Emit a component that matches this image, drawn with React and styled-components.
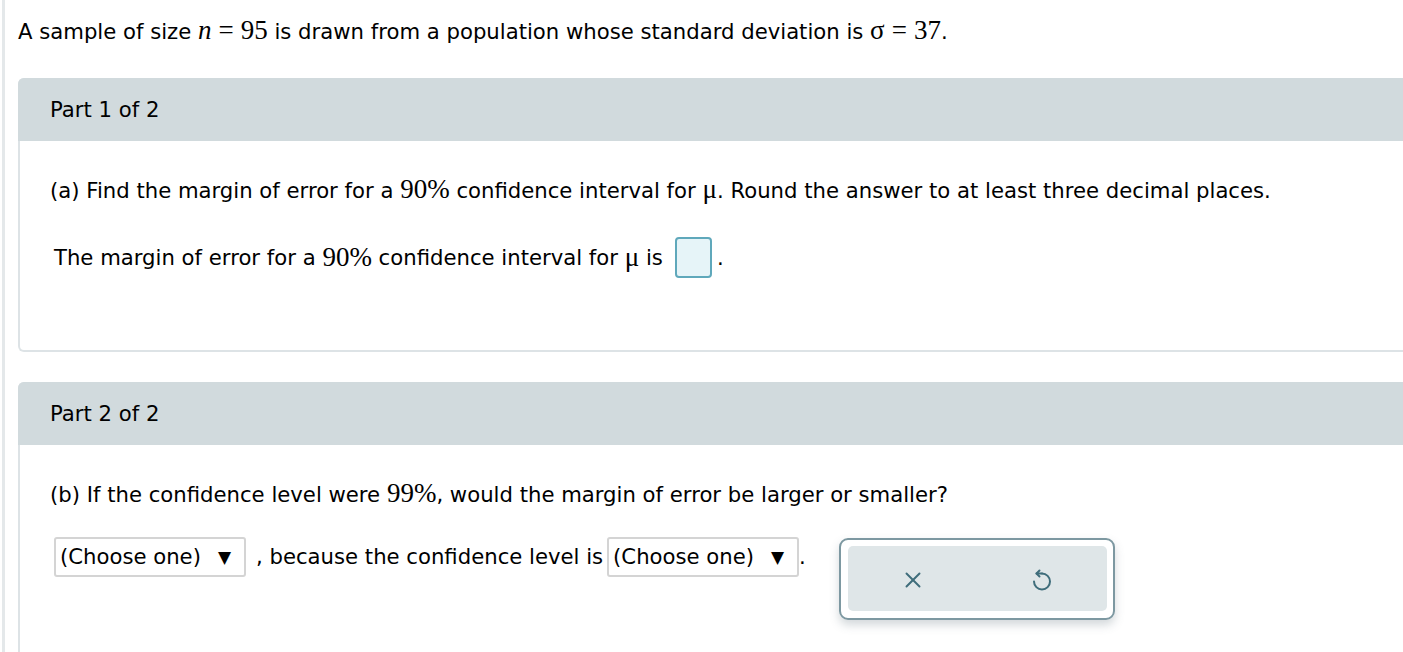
import React from "react";
import styled, { createGlobalStyle } from "styled-components";
import { X } from "lucide-react";

const Global = createGlobalStyle`
	html, body {
		margin: 0;
		padding: 0;
		background: #fff;
		overflow: hidden;
	}
	body {
		font-family: Verdana, "DejaVu Sans", sans-serif;
		color: #000;
	}
`;

const Page = styled.div`
	height: 652px;
	margin-left: 2px;
	border-left: 3px solid #e4e8ea;
	padding: 17px 0 0 13px;
	box-sizing: border-box;
`;

const Intro = styled.div`
	font-size: 21.2px;
	line-height: 28px;
	margin-bottom: 32px;
`;

const M = styled.span`
	font-family: "Liberation Serif", "DejaVu Serif", serif;
	font-size: 27px;
	line-height: 1;
	font-style: ${p => (p.$italic ? "italic" : "normal")};
`;

const Eq = styled.span`
	font-family: "Liberation Serif", "DejaVu Serif", serif;
	font-size: 27px;
	line-height: 1;
	margin: 0 7px;
`;

const Card = styled.section`
	width: 1400px;
	border: 2px solid #dde3e6;
	border-right: none;
	border-radius: 6px 0 0 6px;
	margin-bottom: 30px;
	min-height: ${p => p.$minHeight}px;
	box-sizing: border-box;
`;

const CardHead = styled.div`
	background: #d1dadd;
	height: 63px;
	display: flex;
	align-items: center;
	padding-left: 32px;
	font-size: 21.2px;
	margin: -2px 0 0 -2px;
	border-radius: 6px 0 0 0;
`;

const CardBody = styled.div`
	padding: 35px 0 0 30px;
	font-size: 21.2px;
`;

const Question = styled.div`
	line-height: 28px;
	margin-bottom: 32px;
`;

const AnswerRow = styled.div`
	display: flex;
	align-items: center;
	padding-left: ${p => p.$indent || 0}px;
	line-height: 28px;
`;

const AnswerBox = styled.span`
	display: inline-block;
	width: 33px;
	height: 37px;
	border: 2px solid #5fa8bb;
	border-radius: 4px;
	background: #e6f4f8;
	margin: 0 5px 0 12px;
`;

const Select = styled.span`
	display: inline-flex;
	align-items: center;
	height: 36px;
	padding: 0 13px 0 4px;
	border: 2px solid #d4d4d4;
	border-radius: 3px;
	margin: ${p => p.$margin};
	white-space: nowrap;
`;

const Arrow = styled.span`
	font-size: 17px;
	margin-left: 17px;
`;

const Row2 = styled.div`
	display: flex;
	align-items: flex-start;
	padding-left: 4px;
	margin-top: -4px;
`;

const Line = styled.div`
	display: flex;
	align-items: center;
	line-height: 28px;
`;

const ActionsWrap = styled.div`
	margin-left: 33px;
	margin-top: 1px;
	width: 276px;
	height: 82px;
	border: 2px solid #7d98a1;
	border-radius: 9px;
	box-shadow: 0 5px 10px rgba(80, 100, 110, 0.25);
	padding: 6px 6px 7px 7px;
	box-sizing: border-box;
`;

const Actions = styled.div`
	background: #dfe6e8;
	border-radius: 5px;
	height: 100%;
	display: flex;
	align-items: center;
	justify-content: space-around;
	color: #3f6d7b;
`;

const IconBtn = styled.span`
	display: flex;
	width: 70px;
	justify-content: center;
	padding-top: 2px;
`;

function UndoIcon() {
	return (
		<svg width="24" height="24" viewBox="0 0 24 24" fill="none" stroke="currentColor"
			strokeWidth="2" strokeLinecap="round" strokeLinejoin="round">
			<path d="M12 5.5 A8 8 0 1 1 4 13.5" />
			<path d="M12 5.5 H6.5" />
			<path d="M9.5 2.5 L6.5 5.5 L9.5 8.5" />
		</svg>
	);
}

export default function App() {
	return (
		<>
			<Global />
			<Page>
				<Intro>
					A sample of size <M $italic>n</M><Eq>=</Eq><M>95</M> is drawn from a population whose
					standard deviation is <M>σ</M><Eq>=</Eq><M>37</M>.
				</Intro>

				<Card $minHeight={274}>
					<CardHead>Part 1 of 2</CardHead>
					<CardBody>
						<Question>
							(a) Find the margin of error for a <M>90%</M> confidence interval for <M>μ</M>. Round the
							answer to at least three decimal places.
						</Question>
						<AnswerRow $indent={4}>
							The margin of error for a&nbsp;<M>90%</M>&nbsp;confidence interval for&nbsp;<M>μ</M>&nbsp;is
							<AnswerBox />.
						</AnswerRow>
					</CardBody>
				</Card>

				<Card $minHeight={300}>
					<CardHead>Part 2 of 2</CardHead>
					<CardBody>
						<Question>
							(b) If the confidence level were <M>99%</M>, would the margin of error be larger or smaller?
						</Question>
						<Row2>
							<Line>
								<Select $margin="0 10px 0 0">
									(Choose one)<Arrow>▼</Arrow>
								</Select>
								, because the confidence level is
								<Select $margin="0 0 0 4px">
									(Choose one)<Arrow>▼</Arrow>
								</Select>
								.
							</Line>
							<ActionsWrap>
								<Actions>
									<IconBtn>
										<X size={26} strokeWidth={1.8} />
									</IconBtn>
									<IconBtn>
										<UndoIcon />
									</IconBtn>
								</Actions>
							</ActionsWrap>
						</Row2>
					</CardBody>
				</Card>
			</Page>
		</>
	);
}
